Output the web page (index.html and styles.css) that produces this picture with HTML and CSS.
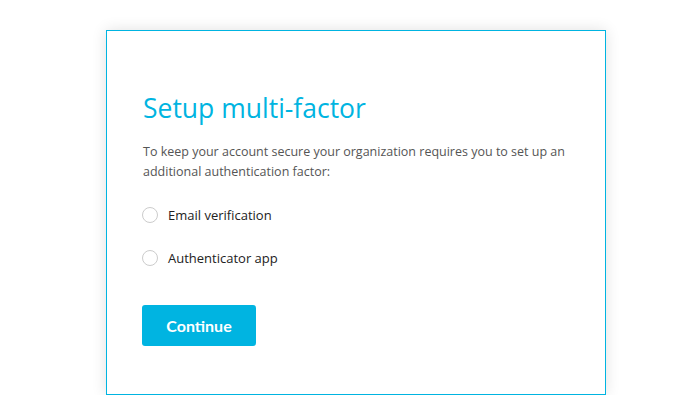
FILE: index.html
```html
<!DOCTYPE html>
<html lang="en">
<head>
  <meta charset="UTF-8">
  <meta name="viewport" content="width=device-width, initial-scale=1.0">
  <title>Setup multi-factor</title>
  <link rel="stylesheet" href="styles.css">
</head>
<body>
  <div class="card">
    <h1 class="title">Setup multi-factor</h1>
    <p class="intro">To keep your account secure your organization requires you to set up an additional authentication factor:</p>

    <div class="options">
      <label class="option">
        <input type="radio" name="factor" value="email">
        <span class="dot"></span>
        Email verification
      </label>
      <label class="option">
        <input type="radio" name="factor" value="app">
        <span class="dot"></span>
        Authenticator app
      </label>
    </div>

    <button class="continue">Continue</button>
  </div>
</body>
</html>
```

FILE: styles.css
```css
body {
  font-family: "Open Sans", Arial, sans-serif;
  margin: 0;
  padding: 30px 0 0 106px;
  background-color: #fff;
  color: #333;
}

.card {
  width: 462px;
  height: 305px;
  padding: 58px 0 0 36px;
  border: 1px solid #00b4e1;
  box-shadow: 0 0 14px rgba(0, 0, 0, 0.12);
  background: white;
}

.title {
  margin: 0;
  font-size: 26.5px;
  font-weight: 400;
  color: #00b4e1;
  line-height: 38px;
}

.intro {
  margin: 15px 0 0;
  width: 440px;
  font-size: 12.5px;
  line-height: 20px;
  color: #555;
}

.options {
  margin-top: 22px;
}

.option {
  display: flex;
  align-items: center;
  gap: 10px;
  height: 22px;
  margin-bottom: 21px;
  font-size: 13px;
  color: #222;
}

.option input {
  display: none;
}

.dot {
  width: 14px;
  height: 14px;
  border: 1px solid #ccc;
  border-radius: 50%;
  margin-left: -1px;
}

.continue {
  margin: 15px 0 0 -1px;
  width: 114px;
  height: 41px;
  border: none;
  border-radius: 3px;
  background-color: #00b4e1;
  color: white;
  font-family: Lato, sans-serif;
  font-weight: bold;
  font-size: 16px;
  cursor: pointer;
}
```
